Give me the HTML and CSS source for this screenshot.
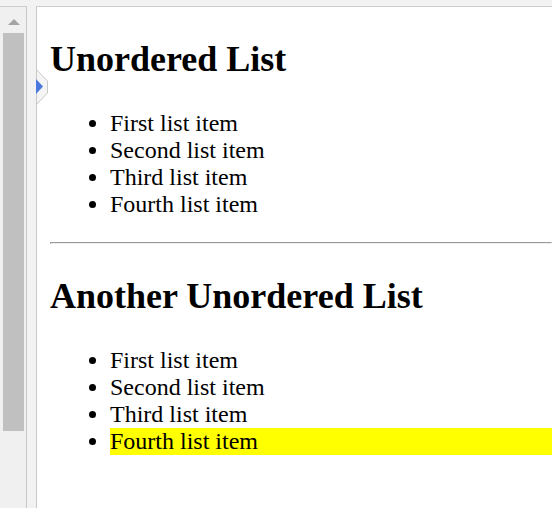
FILE: index.html
```html
<!DOCTYPE html>
<html>
<head>
<meta charset="utf-8">
<link rel="stylesheet" href="styles.css">
</head>
<body>
<div class="window">
  <div class="sidebar">
    <div class="track">
      <div class="arrow"></div>
      <div class="thumb"></div>
    </div>
  </div>
  <div class="gap"></div>
  <div class="pane">
    <h1 class="title">Unordered List</h1>
    <ul class="list">
      <li>First list item</li>
      <li>Second list item</li>
      <li>Third list item</li>
      <li>Fourth list item</li>
    </ul>
    <hr class="rule">
    <h1 class="title">Another Unordered List</h1>
    <ul class="list">
      <li>First list item</li>
      <li>Second list item</li>
      <li>Third list item</li>
      <li class="highlight">Fourth list item</li>
    </ul>
  </div>
  <svg class="marker" width="12" height="36" viewBox="0 0 12 36">
    <polygon points="0.5,0.5 11.5,12 11.5,24 0.5,35.5" fill="#f4f4f4" stroke="#c8c8c8" stroke-width="1"/>
    <polygon points="0,10 7,17.5 0,25" fill="#4a78dc"/>
  </svg>
</div>
</body>
</html>
```
FILE: styles.css
```css
html, body {
  margin: 0;
  padding: 0;
}
body {
  width: 552px;
  height: 508px;
  overflow: hidden;
  background: #f2f2f2;
}
.window {
  position: relative;
  display: flex;
  height: 502px;
  margin-top: 6px;
}
.sidebar {
  width: 26px;
  border-top: 1px solid #cdcdcd;
  border-right: 1px solid #c8c8c8;
  background: #f0f0f0;
  box-sizing: content-box;
}
.track {
  display: flex;
  flex-direction: column;
  align-items: center;
  padding-top: 12px;
}
.arrow {
  width: 0;
  height: 0;
  border-left: 6px solid transparent;
  border-right: 6px solid transparent;
  border-bottom: 6px solid #a3a3a3;
  margin-left: 1px;
}
.thumb {
  width: 21px;
  height: 398px;
  margin-top: 8px;
  margin-left: 1px;
  background: #c0c0c0;
}
.gap {
  width: 9px;
  background: #f2f2f2;
}
.pane {
  flex: 1;
  background: #ffffff;
  border-top: 1px solid #cdcdcd;
  border-left: 1px solid #c8c8c8;
  padding-left: 13px;
  overflow: hidden;
  font-family: "Liberation Serif", "Times New Roman", serif;
  color: #000;
}
.title {
  font-size: 36px;
  font-weight: bold;
  line-height: 41px;
  margin: 32px 0 30px 0;
}
.list {
  margin: 0 0 24px 0;
  padding-left: 60px;
  font-size: 24px;
  line-height: 27px;
}
.highlight {
  background: #ffff00;
}
.rule {
  margin: 0;
  height: 0;
  border-style: solid;
  border-width: 1px;
  border-color: #9a9a9a #eeeeee #eeeeee #9a9a9a;
}
.marker {
  position: absolute;
  left: 36px;
  top: 63px;
}
```
